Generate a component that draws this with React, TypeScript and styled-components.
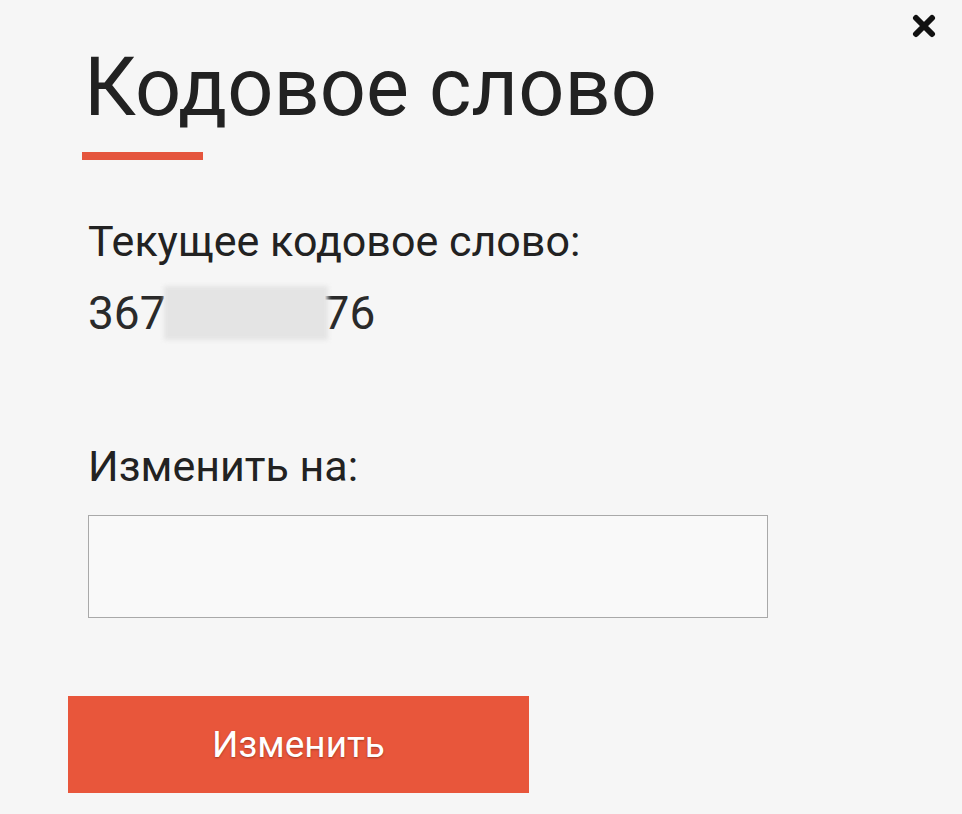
import styled, { createGlobalStyle } from "styled-components";

const GlobalStyle = createGlobalStyle`
  html, body {
    margin: 0;
    padding: 0;
    background: #f6f6f6;
  }
  body {
    font-family: Roboto, "Liberation Sans", Arial, sans-serif;
    color: #222;
  }
`;

const App: React.FC = () => {
  return (
    <>
      <GlobalStyle />
      <Modal>
        <CloseButton aria-label="Закрыть">
          <svg width="24" height="24" viewBox="0 0 24 24">
            <path
              d="M4 4 L20 20 M20 4 L4 20"
              stroke="#111"
              strokeWidth="6"
              strokeLinecap="round"
            />
          </svg>
        </CloseButton>
        <Title>Кодовое слово</Title>
        <Accent />
        <Label>Текущее кодовое слово:</Label>
        <Code>
          367
          <Hidden />
          76
        </Code>
        <Label $gap={101}>Изменить на:</Label>
        <Field type="text" />
        <SubmitButton>Изменить</SubmitButton>
      </Modal>
    </>
  );
};

export default App;

const Modal = styled.div`
  position: relative;
  display: flex;
  flex-direction: column;
  align-items: flex-start;
  width: 962px;
  height: 814px;
  box-sizing: border-box;
  padding: 38px 0 0 84px;
  background: #f6f6f6;
`;

const CloseButton = styled.button`
  position: absolute;
  top: 14px;
  right: 26px;
  padding: 0;
  background: transparent;
  border: none;
  cursor: pointer;
`;

const Title = styled.h1`
  margin: 0;
  font-size: 81px;
  font-weight: 400;
  line-height: 100px;
  color: #222;
`;

const Accent = styled.div`
  width: 121px;
  height: 8px;
  margin: 14px 0 0 -2px;
  background: #e5553d;
`;

const Label = styled.div<{ $gap?: number }>`
  margin-top: ${(p) => p.$gap ?? 56}px;
  margin-left: 4px;
  font-size: 43px;
  line-height: 50px;
  color: #222;
`;

const Code = styled.div`
  display: flex;
  align-items: center;
  margin-top: 20px;
  margin-left: 4px;
  font-size: 46px;
  line-height: 50px;
  color: #2a2a2a;
`;

const Hidden = styled.span`
  display: inline-block;
  width: 164px;
  height: 54px;
  margin: 0 -4px 0 -2px;
  background: #e4e4e4;
  filter: blur(2px);
`;

const Field = styled.input`
  width: 680px;
  height: 103px;
  margin: 24px 0 0 4px;
  box-sizing: border-box;
  border: 1px solid #a9a9a9;
  background: #f9f9f9;
  outline: none;
  font-size: 40px;
`;

const SubmitButton = styled.button`
  width: 461px;
  height: 97px;
  margin: 78px 0 0 -16px;
  border: none;
  background: #e8563b;
  color: #fff;
  font-family: Roboto, "Liberation Sans", Arial, sans-serif;
  font-size: 37px;
  font-weight: 400;
  text-shadow: 0 1px 2px rgba(90, 30, 10, 0.5);
  cursor: pointer;
`;
